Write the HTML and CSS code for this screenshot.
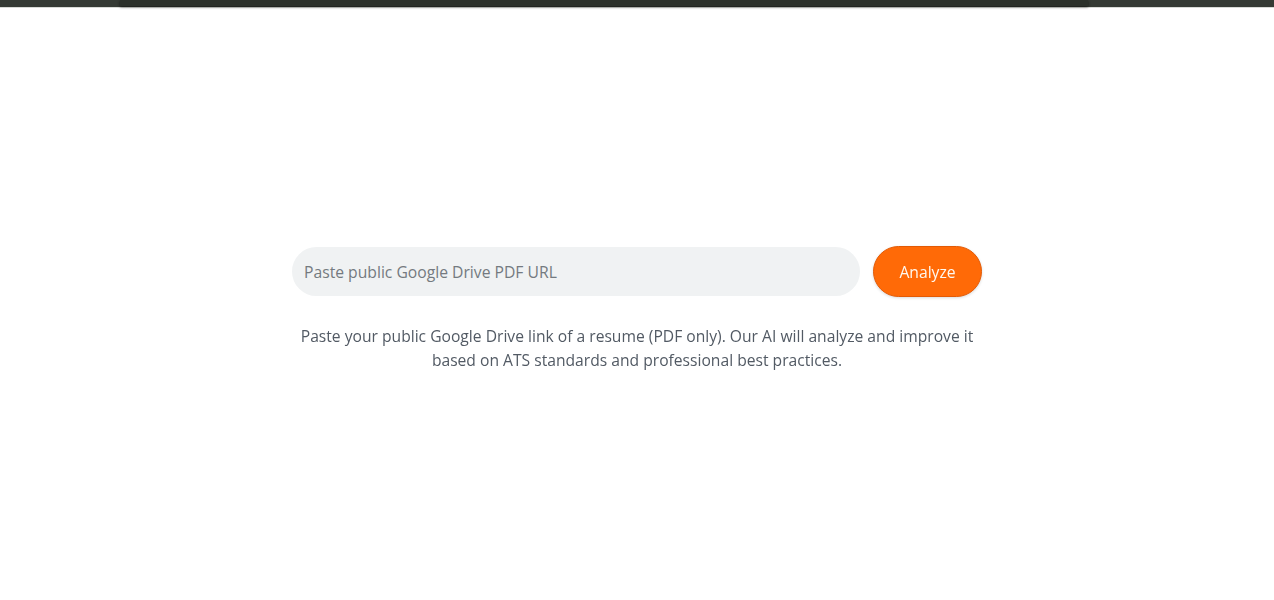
FILE: index.html
```html
<!DOCTYPE html>
<html lang="en">
<head>
<meta charset="utf-8">
<title>Resume Analyzer</title>
<link rel="stylesheet" href="styles.css">
</head>
<body>
<div class="topbar"><div class="topbar-inner"></div></div>
<main class="main">
  <form class="form">
    <div class="row">
      <input class="url-input" type="text" placeholder="Paste public Google Drive PDF URL" autofocus>
      <button class="analyze-btn" type="button">Analyze</button>
    </div>
    <p class="hint">Paste your public Google Drive link of a resume (PDF only). Our AI will analyze and improve it based on ATS standards and professional best practices.</p>
  </form>
</main>
</body>
</html>
```
FILE: styles.css
```css
* { box-sizing: border-box; }
html, body { margin: 0; padding: 0; background: #ffffff; }
body { font-family: "Open Sans", "Noto Sans", sans-serif; color: #4b5563; }
.topbar {
  height: 8px;
  background: #353a34;
  border-bottom: 1px solid #d8dad6;
  display: flex;
  justify-content: flex-start;
  padding-left: 120px;
}
.topbar-inner {
  width: 968px;
  height: 6px;
  background: #2b302a;
  box-shadow: 0 1px 3px rgba(0,0,0,0.6);
}
.main {
  display: flex;
  justify-content: center;
  padding-top: 238px;
}
.form { width: 690px; display: flex; flex-direction: column; align-items: center; }
.row { display: flex; align-items: center; gap: 13px; width: 690px; }
.url-input {
  flex: 1;
  height: 49px;
  border: none;
  outline: none;
  border-radius: 25px;
  background: #f0f2f3;
  padding: 0 12px;
  font-family: inherit;
  font-size: 15.7px;
  color: #333;
  caret-color: #222;
}
.url-input::placeholder { color: #747a80; }
.analyze-btn {
  width: 109px;
  height: 51px;
  border-radius: 26px;
  border: 1.5px solid #e35a05;
  background: #ff6a07;
  color: #fff8ef;
  font-family: inherit;
  font-size: 15.7px;
  box-shadow: 0 1px 3px rgba(0,0,0,0.15);
}
.hint {
  margin: 27px 0 0;
  text-align: center;
  font-size: 15.65px;
  line-height: 24px;
  color: #525a64;
  width: 690px;
}
```
